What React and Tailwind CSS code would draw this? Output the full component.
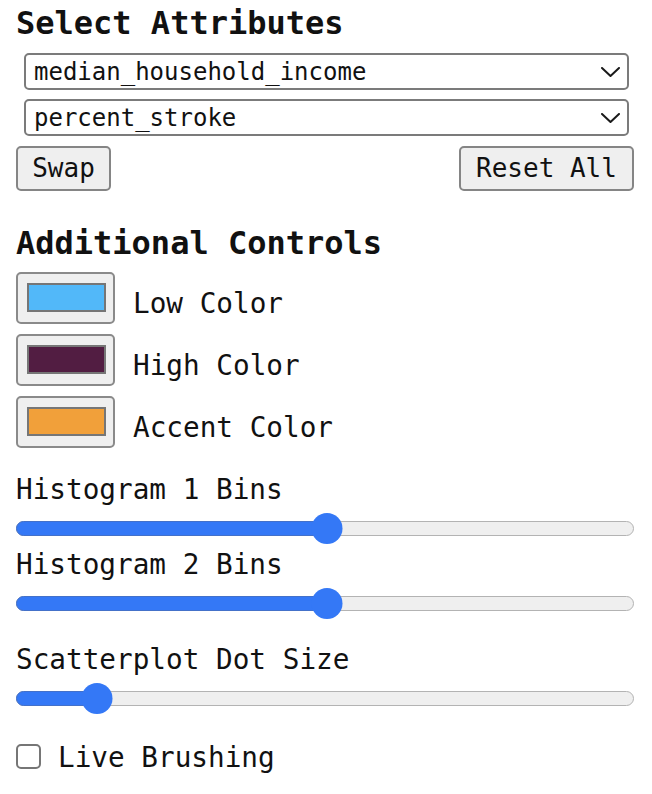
import React, { useState } from 'react';

const attributes = ['median_household_income', 'percent_stroke'];

const swatches = [
    { label: 'Low Color', color: 'bg-[#52b8f9]' },
    { label: 'High Color', color: 'bg-[#521d42]' },
    { label: 'Accent Color', color: 'bg-[#f1a03a]' },
];

// Chevron for the fake dropdowns
const Chevron = () => (
    <svg width="19" height="10" viewBox="0 0 19 10" fill="none">
        <path d="M1 1l8.5 8 8.5-8" stroke="#1a1a1a" strokeWidth="2" strokeLinecap="round" strokeLinejoin="round" />
    </svg>
);

const Slider = ({ value }) => {
    // thumb centre runs from 15px to (width - 15px), like the native range input
    const pos = `calc(15px + (100% - 30px) * ${value})`;
    return (
        <div className="relative h-[32px] flex items-center">
            <div className="w-full h-[15px] rounded-full border border-[#b3b3b3] bg-[#efefef]"></div>
            <div
                className="absolute left-0 h-[15px] rounded-full border border-[#4471c9] bg-[#3478f6]"
                style={{ width: pos }}
            ></div>
            <div
                className="absolute w-[31px] h-[31px] rounded-full bg-[#3478f6] -translate-x-1/2"
                style={{ left: pos }}
            ></div>
        </div>
    );
};

const App = () => {
    const [live, setLive] = useState(false);

    return (
        <div className="w-[652px] pl-4 pr-[18px] pt-1 text-[#111] font-['DejaVu_Sans_Mono','Liberation_Mono',monospace]">
            <h2 className="text-[32px] leading-[38px] font-bold">Select Attributes</h2>

            {attributes.map((a, i) => (
                <div
                    key={a}
                    className={`ml-2 mr-[5px] h-[37px] flex items-center justify-between pl-[8px] pr-[7px] border-2 border-[#7b7b7b] rounded-[5px] bg-white text-[24px] ${i === 0 ? 'mt-[11px]' : 'mt-[9px]'}`}
                >
                    <span>{a}</span>
                    <Chevron />
                </div>
            ))}

            <div className="mt-[10px] flex justify-between">
                <button className="h-[45px] w-[95px] border-2 border-[#858585] rounded-[5px] bg-[#efefef] text-[26px]">
                    Swap
                </button>
                <button className="h-[45px] w-[175px] border-2 border-[#858585] rounded-[5px] bg-[#efefef] text-[26px]">
                    Reset All
                </button>
            </div>

            <h2 className="mt-[33px] text-[32px] leading-[38px] font-bold">Additional Controls</h2>

            <div className="mt-[10px] flex flex-col gap-[10px]">
                {swatches.map(s => (
                    <div key={s.label} className="flex items-center gap-[18px]">
                        <div className="w-[99px] h-[52px] border-2 border-[#8a8a8a] rounded-[5px] bg-[#efefef] pl-[9px] pr-[7px] pt-[9px] pb-[10px]">
                            <div className={`w-full h-full border-2 border-[#767676] ${s.color}`}></div>
                        </div>
                        <span className="pt-[11px] text-[27.7px] leading-[34px]">{s.label}</span>
                    </div>
                ))}
            </div>

            <div className="mt-[25px] text-[27.7px] leading-[34px]">Histogram 1 Bins</div>
            <div className="mt-[5px]">
                <Slider value={0.503} />
            </div>

            <div className="mt-[4px] text-[27.7px] leading-[34px]">Histogram 2 Bins</div>
            <div className="mt-[5px]">
                <Slider value={0.503} />
            </div>

            <div className="mt-[24px] text-[27.7px] leading-[34px]">Scatterplot Dot Size</div>
            <div className="mt-[5px]">
                <Slider value={0.112} />
            </div>

            <label className="mt-[25px] h-[34px] flex items-center gap-[17px] cursor-pointer" onClick={() => setLive(!live)}>
                <span className={`w-[25px] h-[25px] border-2 border-[#767676] rounded-[5px] ${live ? 'bg-[#3478f6]' : 'bg-white'}`}></span>
                <span className="pt-[4px] text-[27.7px] leading-[34px]">Live Brushing</span>
            </label>
        </div>
    );
};

export default App;
